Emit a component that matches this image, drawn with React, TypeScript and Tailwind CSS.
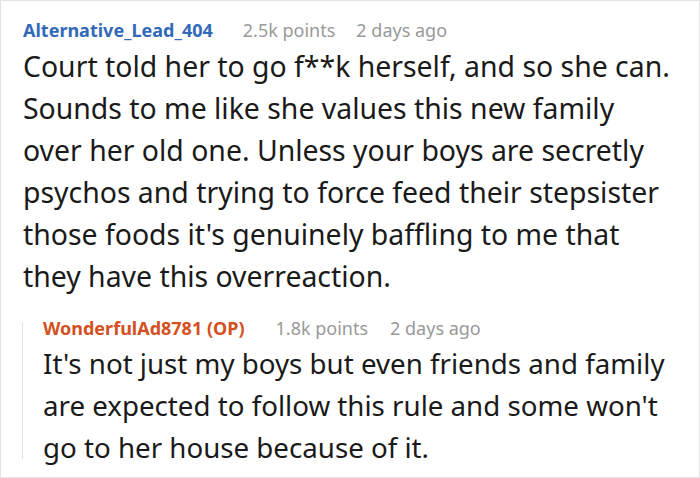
const font = { fontFamily: '"Noto Sans", "Open Sans", sans-serif' };

export default function App() {
  return (
    <div style={font} className="w-[700px] h-[478px] bg-white border border-[#e3e3e3] overflow-hidden">
      {/* parent comment */}
      <div className="pl-[22px] pt-[17px]">
        <div className="flex items-baseline text-[18px] leading-[24px]">
          <span className="font-bold text-[#336ab8]">Alternative_Lead_404</span>
          <span className="ml-[30px] text-[#999999]">2.5k points</span>
          <span className="ml-[21px] text-[#999999]">2 days ago</span>
        </div>
        <p className="mt-[3px] w-[655px] text-[28.4px] leading-[42px] text-[#1a1a1a]">
          Court told her to go f**k herself, and so she can. Sounds to me like she values this new family over her old one. Unless your boys are secretly psychos and trying to force feed their stepsister those foods it's genuinely baffling to me that they have this overreaction.
        </p>
      </div>

      {/* reply */}
      <div className="ml-[21px] mt-[25px] h-[137px] border-l border-[#e3e3e3] pl-[20px]">
        <div className="flex items-baseline text-[18px] leading-[12px]">
          <span className="font-bold text-[#d4501e]">WonderfulAd8781 (OP)</span>
          <span className="ml-[31px] text-[#999999]">1.8k points</span>
          <span className="ml-[22px] text-[#999999]">2 days ago</span>
        </div>
        <p className="mt-[8px] w-[640px] text-[27.7px] leading-[42px] text-[#1a1a1a]">
          It's not just my boys but even friends and family are expected to follow this rule and some won't go to her house because of it.
        </p>
      </div>
    </div>
  );
}
